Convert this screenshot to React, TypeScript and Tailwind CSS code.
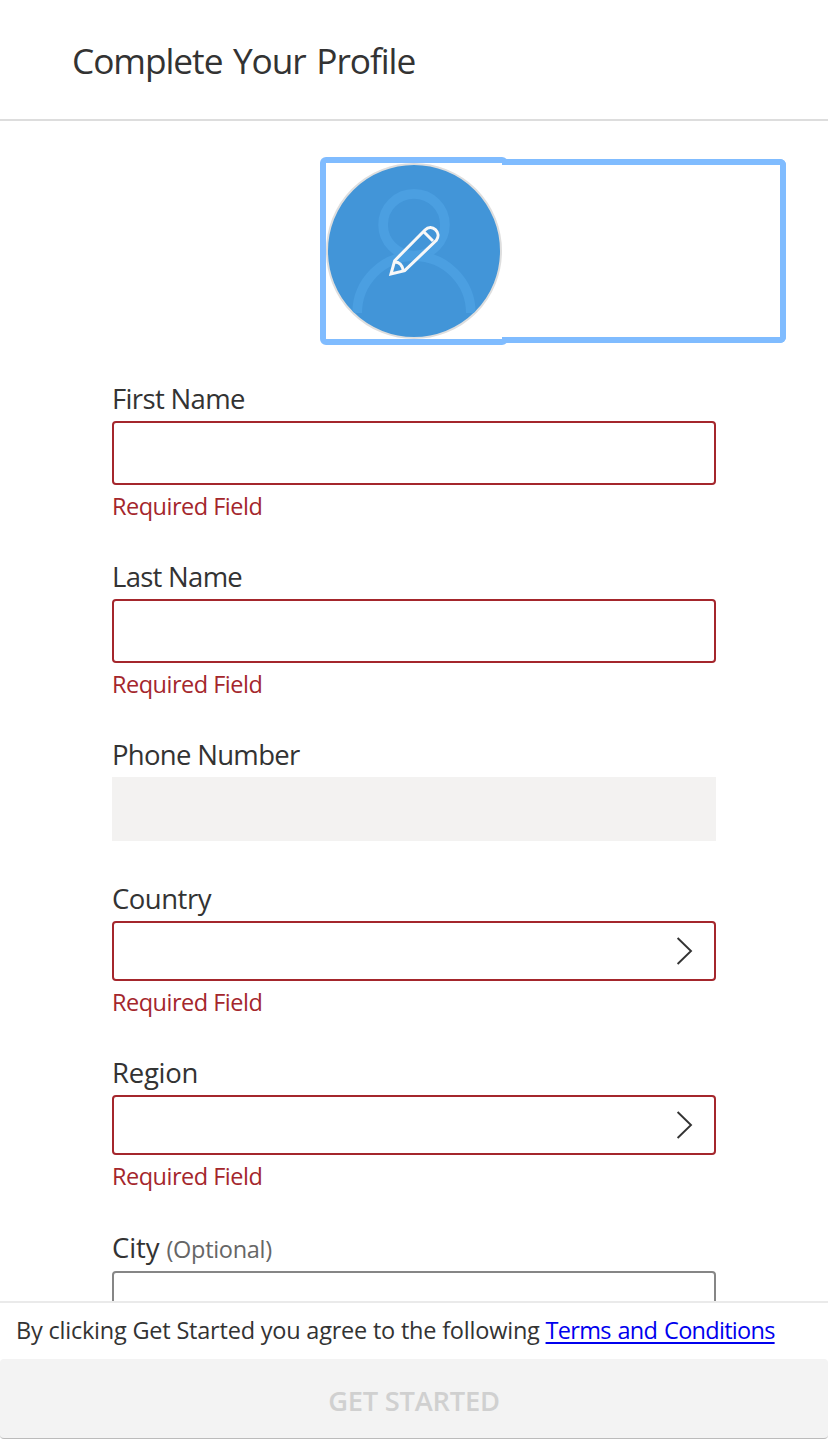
import type { ReactNode } from "react";

const REQUIRED = "Required Field";

function Avatar() {
  return (
    <svg width="176" height="176" viewBox="0 0 176 176" fill="none" className="block">
      <clipPath id="disc">
        <circle cx="88" cy="88" r="86" />
      </clipPath>
      <circle cx="88" cy="88" r="87" fill="#4295d8" stroke="#dedede" strokeWidth="2" />
      <g stroke="#4b9fe1" strokeWidth="9.7" clipPath="url(#disc)">
        <circle cx="88" cy="61.7" r="30.9" />
        <path d="M31.2 150A56.8 56.8 0 0 1 144.8 150" />
      </g>
      <g transform="translate(-16 -15) scale(.33333)" stroke="#f8f8f8" strokeWidth="9">
        <path d="M243 378L254 338L345 246C366 225 396 254 379 277L284 368Z" />
        <path d="M342 252L369 279M254 342Q275 342 280 368" />
      </g>
    </svg>
  );
}

function Chevron() {
  return (
    <svg width="18" height="30" viewBox="0 0 18 30" fill="none" className="mr-[20px]">
      <path d="M1.6 2L15 15L1.6 28" stroke="#333" strokeWidth="1.9" />
    </svg>
  );
}

type FieldProps = {
  label: string;
  labelClass: string;
  boxClass: string;
  error?: boolean;
  note?: ReactNode;
  children?: ReactNode;
};

function Field({ label, labelClass, boxClass, error, note, children }: FieldProps) {
  return (
    <div>
      <div className="flex h-[44px] items-baseline text-[27.5px] text-[#333]">
        <span className={labelClass}>{label}</span>
        {note}
      </div>
      <div className={`flex w-[604px] items-center justify-end ${boxClass}`}>{children}</div>
      {error && (
        <div className="h-[44px] text-[23.5px] leading-[42px] tracking-[-0.5px] text-[#a4262c]">{REQUIRED}</div>
      )}
    </div>
  );
}

export default function App() {
  return (
    <div className="flex h-[1441px] w-[828px] flex-col overflow-hidden bg-white font-['Open_Sans',sans-serif]">
      <header className="flex h-[121px] shrink-0 items-center border-b-2 border-[#ddd] pt-[1px] pl-[72px] text-[35.3px] tracking-[-1.06px] [word-spacing:2.4px] text-[#333]">
        <h1>Complete Your Profile</h1>
      </header>
      <main className="min-h-0 flex-1 overflow-hidden">
        <div className="flex items-center pt-[36px] pl-[320px]">
          <div className="size-[188px] rounded-[6px] border-[6px] border-[#80bcff]">
            <Avatar />
          </div>
          <div className="relative -ml-[6px] h-[184px] w-[284px] rounded-r-[6px] border-y-[6px] border-r-[6px] border-[#80bcff] bg-white" />
        </div>
        <form className="flex flex-col pt-[32px] pl-[112px]">
          <div className="h-[178px]">
            <Field label="First Name" labelClass="leading-[44px] tracking-[-0.65px]" boxClass="h-[64px] rounded-[4px] border-2 border-[#a4262c]" error />
          </div>
          <div className="h-[178px]">
            <Field label="Last Name" labelClass="leading-[44px] tracking-[-0.72px]" boxClass="h-[64px] rounded-[4px] border-2 border-[#a4262c]" error />
          </div>
          <div className="h-[144px]">
            <Field label="Phone Number" labelClass="leading-[44px] tracking-[-0.7px]" boxClass="h-[64px] bg-[#f3f2f1]" />
          </div>
          <div className="h-[174px]">
            <Field label="Country" labelClass="leading-[44px] tracking-[-0.5px]" boxClass="h-[60px] rounded-[4px] border-2 border-[#a4262c]" error>
              <Chevron />
            </Field>
          </div>
          <div className="h-[176px]">
            <Field label="Region" labelClass="leading-[44px] tracking-[-0.25px]" boxClass="h-[60px] rounded-[4px] border-2 border-[#a4262c]" error>
              <Chevron />
            </Field>
          </div>
          <Field
            label="City"
            labelClass="leading-[42px] tracking-[-0.1px]"
            boxClass="h-[64px] rounded-[4px] border-2 border-[#868686]"
            note={<span className="ml-[7px] text-[23.5px] leading-[40px] tracking-[-0.3px] text-[#666]">(Optional)</span>}
          />
        </form>
      </main>
      <footer className="flex h-[140px] shrink-0 flex-col border-t-2 border-[#eaeaea] bg-white">
        <p className="h-[56px] pl-[16px] text-[23.5px] leading-[55px] whitespace-nowrap text-[#333]">
          <span className="tracking-[-0.21px]">By clicking Get Started you agree to the following </span>
          <a className="tracking-[-0.72px] [word-spacing:1.5px] text-[#0000ee] underline decoration-2 underline-offset-[3px]">Terms and Conditions</a>
        </p>
        <button className="h-[80px] rounded-[4px] border-b border-[#bbb] bg-[#f3f3f3] pt-[5px] text-[27.3px] font-semibold tracking-[-0.25px] text-[#d0d0d0]">
          GET STARTED
        </button>
      </footer>
    </div>
  );
}
